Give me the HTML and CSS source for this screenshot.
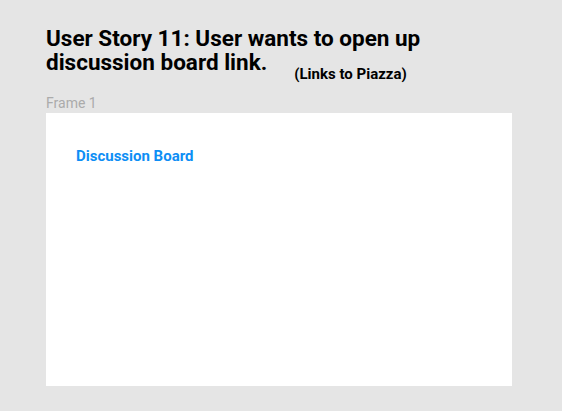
FILE: index.html
```html
<!DOCTYPE html>
<html>
<head>
<meta charset="utf-8">
<link rel="stylesheet" href="styles.css">
</head>
<body>
<div class="canvas">
  <h1 class="title">User Story 11: User wants to open up<br>discussion board link.<span class="note">(Links to Piazza)</span></h1>
  <div class="frame-label">Frame 1</div>
  <div class="frame">
    <a class="link">Discussion Board</a>
  </div>
</div>
</body>
</html>
```

FILE: styles.css
```css
html, body {
  margin: 0;
  padding: 0;
  background: #e5e5e5;
}
body {
  width: 562px;
  height: 411px;
  overflow: hidden;
  font-family: Roboto, "Liberation Sans", sans-serif;
}
.canvas {
  padding: 26px 0 0 46px;
}
.title {
  margin: 0;
  font-size: 22.5px;
  line-height: 24px;
  font-weight: 700;
  color: #000;
}
.note {
  font-size: 15px;
  line-height: 0;
  margin-left: 27px;
  vertical-align: -9px;
  font-weight: 700;
}
.frame-label {
  margin-top: 21px;
  margin-bottom: 2px;
  font-size: 14px;
  line-height: 16px;
  color: #ababab;
}
.frame {
  width: 466px;
  height: 273px;
  background: #ffffff;
  box-sizing: border-box;
  padding: 34px 0 0 30px;
}
.link {
  display: block;
  font-size: 15px;
  line-height: 18px;
  font-weight: 700;
  color: #0d8ef5;
}
```
